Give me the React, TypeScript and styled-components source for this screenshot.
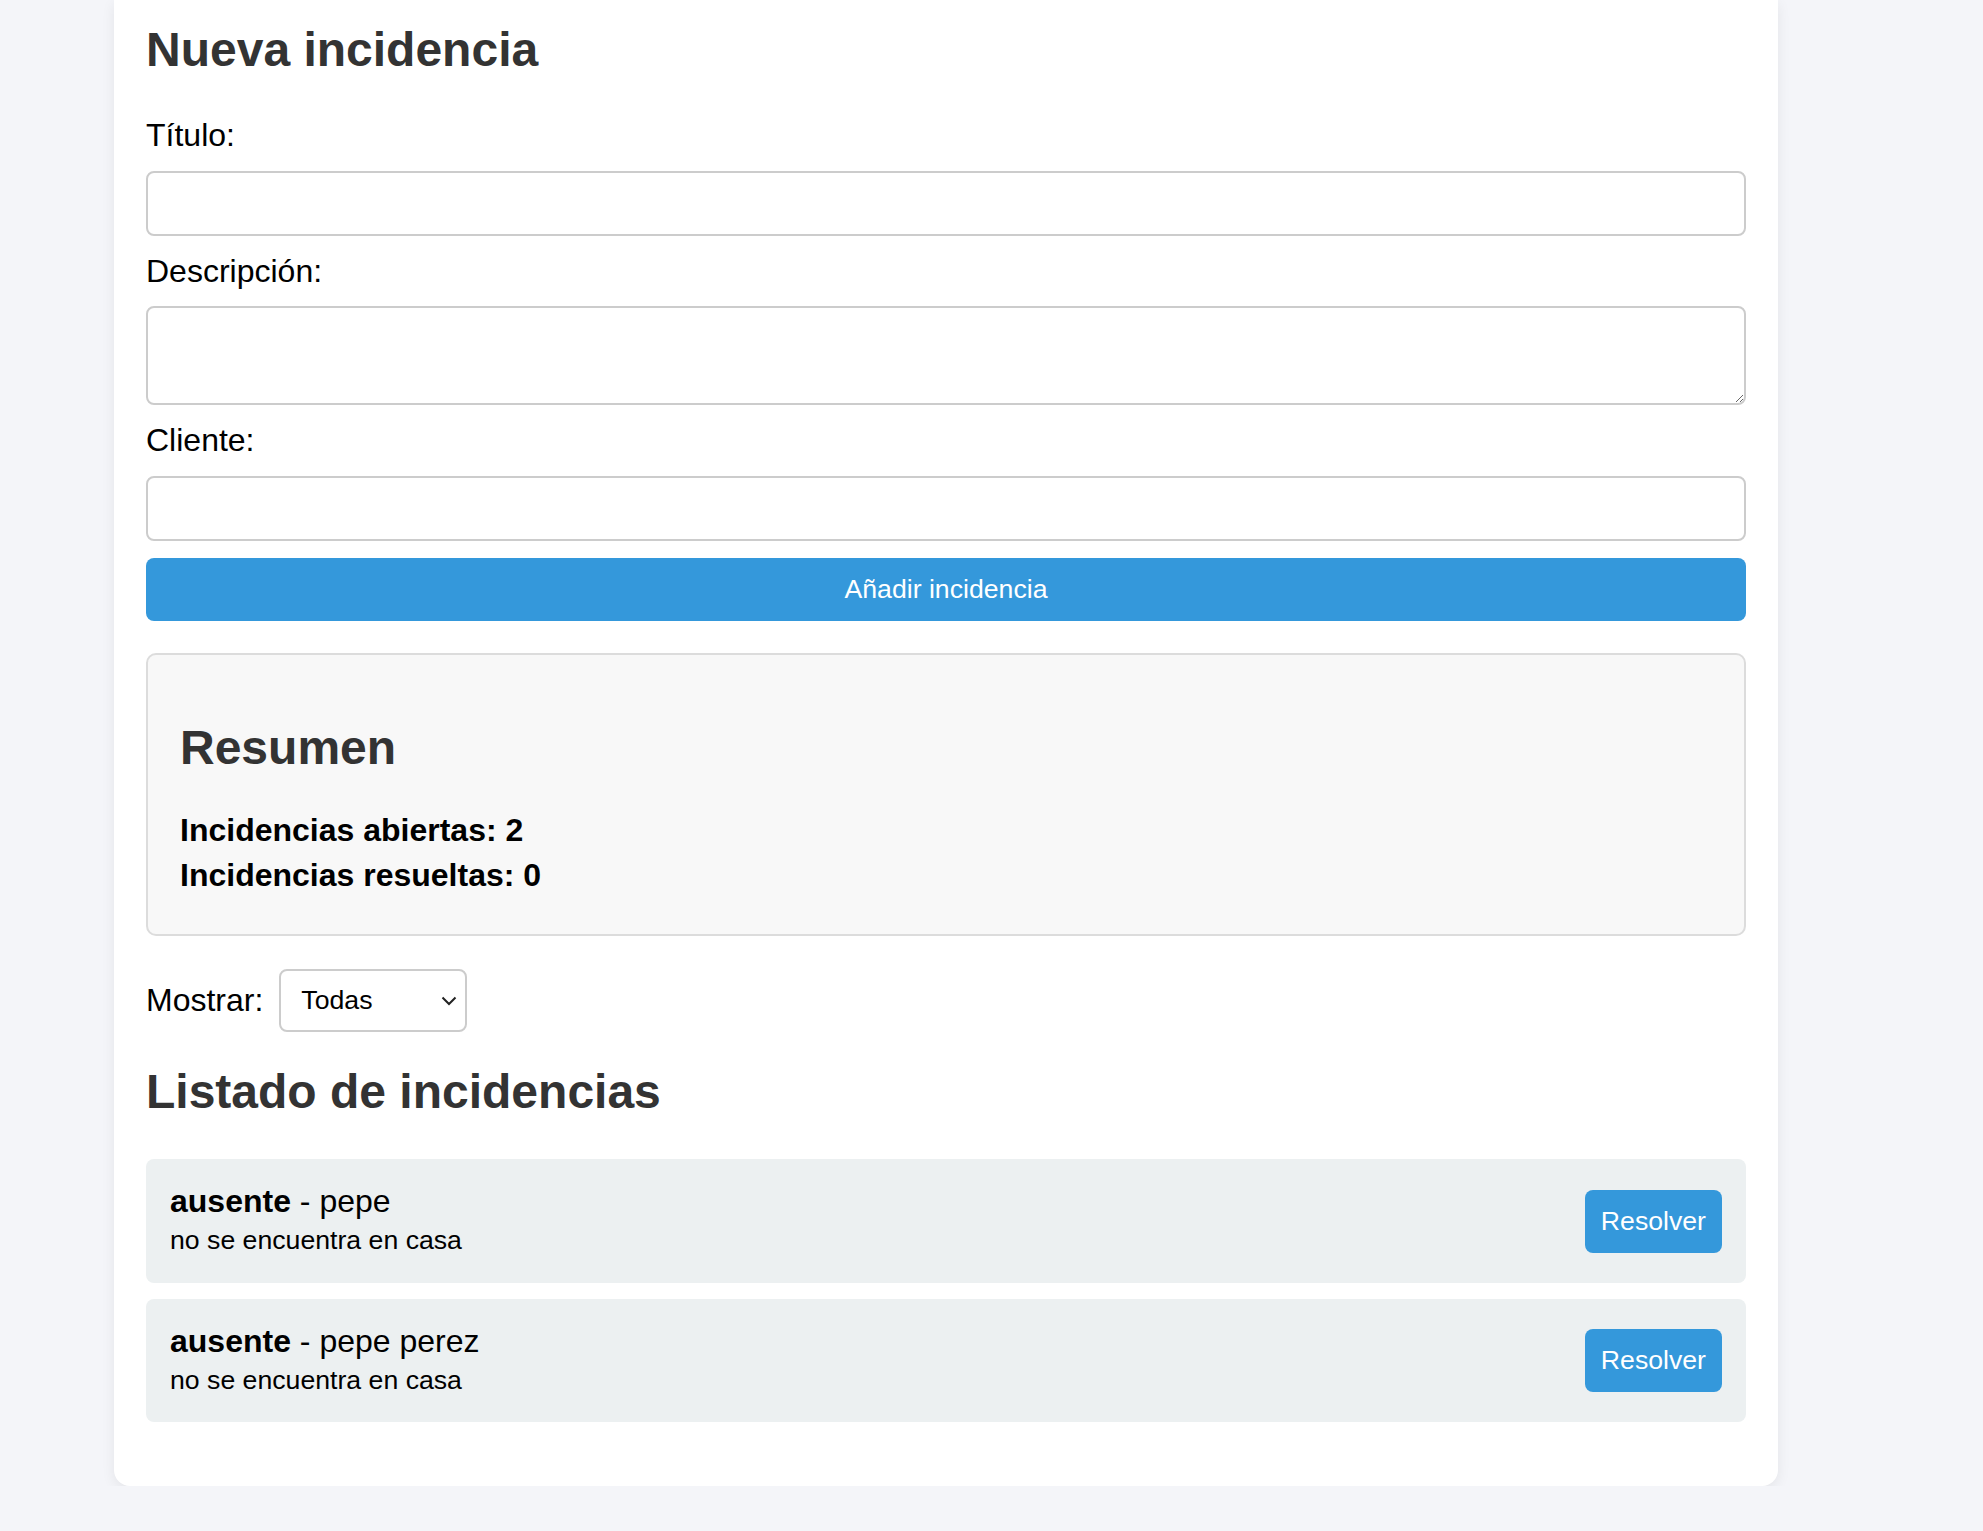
import React, { useState } from "react";
import styled, { createGlobalStyle } from "styled-components";

const GlobalStyle = createGlobalStyle`
  html, body {
    margin: 0;
    padding: 0;
  }
  body {
    background: #f4f5f9;
    font-family: "Liberation Sans", Arial, Helvetica, sans-serif;
    color: #000;
  }
`;

const Card = styled.main`
  box-sizing: border-box;
  width: 1664px;
  margin-left: 114px;
  padding: 22px 32px 64px;
  background: #ffffff;
  border-radius: 0 0 16px 16px;
  box-shadow: 0 4px 14px rgba(0, 0, 0, 0.07);
`;

const Heading = styled.h2<{ $mt?: number; $mb?: number }>`
  margin: ${(p) => p.$mt ?? 0}px 0 ${(p) => p.$mb ?? 39.84}px;
  font-size: 48px;
  font-weight: 700;
  line-height: normal;
  color: #333;
`;

const Form = styled.form`
  display: flex;
  flex-direction: column;
  gap: 17px;
`;

const Label = styled.label`
  display: block;
  font-size: 32px;
  line-height: 36.8px;
`;

const TextInput = styled.input`
  box-sizing: border-box;
  width: 100%;
  height: 65px;
  padding: 16px;
  border: 2px solid #ccc;
  border-radius: 8px;
  font-family: inherit;
  font-size: 26.67px;
  background: #fff;
`;

const TextArea = styled.textarea`
  box-sizing: border-box;
  display: block;
  width: 100%;
  height: 99px;
  padding: 16px;
  border: 2px solid #ccc;
  border-radius: 8px;
  font-family: inherit;
  font-size: 26.67px;
  background: #fff;
  resize: vertical;
`;

const PrimaryButton = styled.button<{ $block?: boolean }>`
  ${(p) => (p.$block ? "width: 100%;" : "")}
  padding: 16px;
  border: none;
  border-radius: 8px;
  background: #3498db;
  color: #fff;
  font-family: inherit;
  font-size: 26.67px;
  line-height: 31px;
  cursor: pointer;
  flex-shrink: 0;
`;

const Summary = styled.section`
  margin-top: 32px;
  padding: 32px;
  border: 2px solid #dcdcdc;
  border-radius: 10px;
  background: #f8f8f8;
`;

const SummaryLine = styled.p`
  margin: 0 0 8px;
  font-size: 32px;
  font-weight: 700;
  line-height: 36.8px;
`;

const FilterRow = styled.div`
  display: flex;
  align-items: center;
  gap: 16px;
  margin-top: 33px;
`;

const FilterLabel = styled.label`
  font-size: 32px;
  line-height: 36.8px;
`;

const SelectWrap = styled.div`
  position: relative;
  display: inline-flex;
`;

const Select = styled.select`
  box-sizing: border-box;
  width: 188px;
  height: 63px;
  padding: 0 44px 0 20px;
  border: 2px solid #ccc;
  border-radius: 8px;
  background: #fff;
  font-family: inherit;
  font-size: 26.67px;
  color: #000;
  appearance: none;
  -webkit-appearance: none;
`;

const Chevron = styled.svg`
  position: absolute;
  right: 10px;
  top: 50%;
  width: 16px;
  height: 10px;
  margin-top: -4px;
  pointer-events: none;
`;

const List = styled.ul`
  list-style: none;
  margin: 0;
  padding: 0;
  display: flex;
  flex-direction: column;
  gap: 16px;
`;

const Item = styled.li`
  display: flex;
  align-items: center;
  justify-content: space-between;
  padding: 24px;
  border-radius: 8px;
  background: #ecf0f1;
`;

const ItemText = styled.div`
  font-size: 32px;
  line-height: 36.8px;
`;

const ItemDesc = styled.small`
  font-size: 26.67px;
`;

type Incidencia = { id: number; titulo: string; cliente: string; descripcion: string };

const incidencias: Incidencia[] = [
  { id: 1, titulo: "ausente", cliente: "pepe", descripcion: "no se encuentra en casa" },
  { id: 2, titulo: "ausente", cliente: "pepe perez", descripcion: "no se encuentra en casa" },
];

export default function App() {
  const [filtro, setFiltro] = useState("todas");
  return (
    <>
      <GlobalStyle />
      <Card>
        <Heading>Nueva incidencia</Heading>
        <Form onSubmit={(e) => e.preventDefault()}>
          <Label htmlFor="titulo">Título:</Label>
          <TextInput id="titulo" type="text" />
          <Label htmlFor="descripcion">Descripción:</Label>
          <TextArea id="descripcion" />
          <Label htmlFor="cliente">Cliente:</Label>
          <TextInput id="cliente" type="text" />
          <PrimaryButton $block type="submit">
            Añadir incidencia
          </PrimaryButton>
        </Form>

        <Summary>
          <Heading $mt={33} $mb={37}>
            Resumen
          </Heading>
          <SummaryLine>Incidencias abiertas: 2</SummaryLine>
          <SummaryLine>Incidencias resueltas: 0</SummaryLine>
        </Summary>

        <FilterRow>
          <FilterLabel htmlFor="filtro">Mostrar:</FilterLabel>
          <SelectWrap>
            <Select id="filtro" value={filtro} onChange={(e) => setFiltro(e.target.value)}>
              <option value="todas">Todas</option>
              <option value="abiertas">Abiertas</option>
              <option value="resueltas">Resueltas</option>
            </Select>
            <Chevron viewBox="0 0 16 10" fill="none" aria-hidden="true">
              <path d="M1.5 1.5 L8 8 L14.5 1.5" stroke="#222" strokeWidth="2" />
            </Chevron>
          </SelectWrap>
        </FilterRow>

        <Heading $mt={32.6}>Listado de incidencias</Heading>
        <List>
          {incidencias.map((inc) => (
            <Item key={inc.id}>
              <ItemText>
                <strong>{inc.titulo}</strong> - {inc.cliente}
                <br />
                <ItemDesc>{inc.descripcion}</ItemDesc>
              </ItemText>
              <PrimaryButton type="button">Resolver</PrimaryButton>
            </Item>
          ))}
        </List>
      </Card>
    </>
  );
}
